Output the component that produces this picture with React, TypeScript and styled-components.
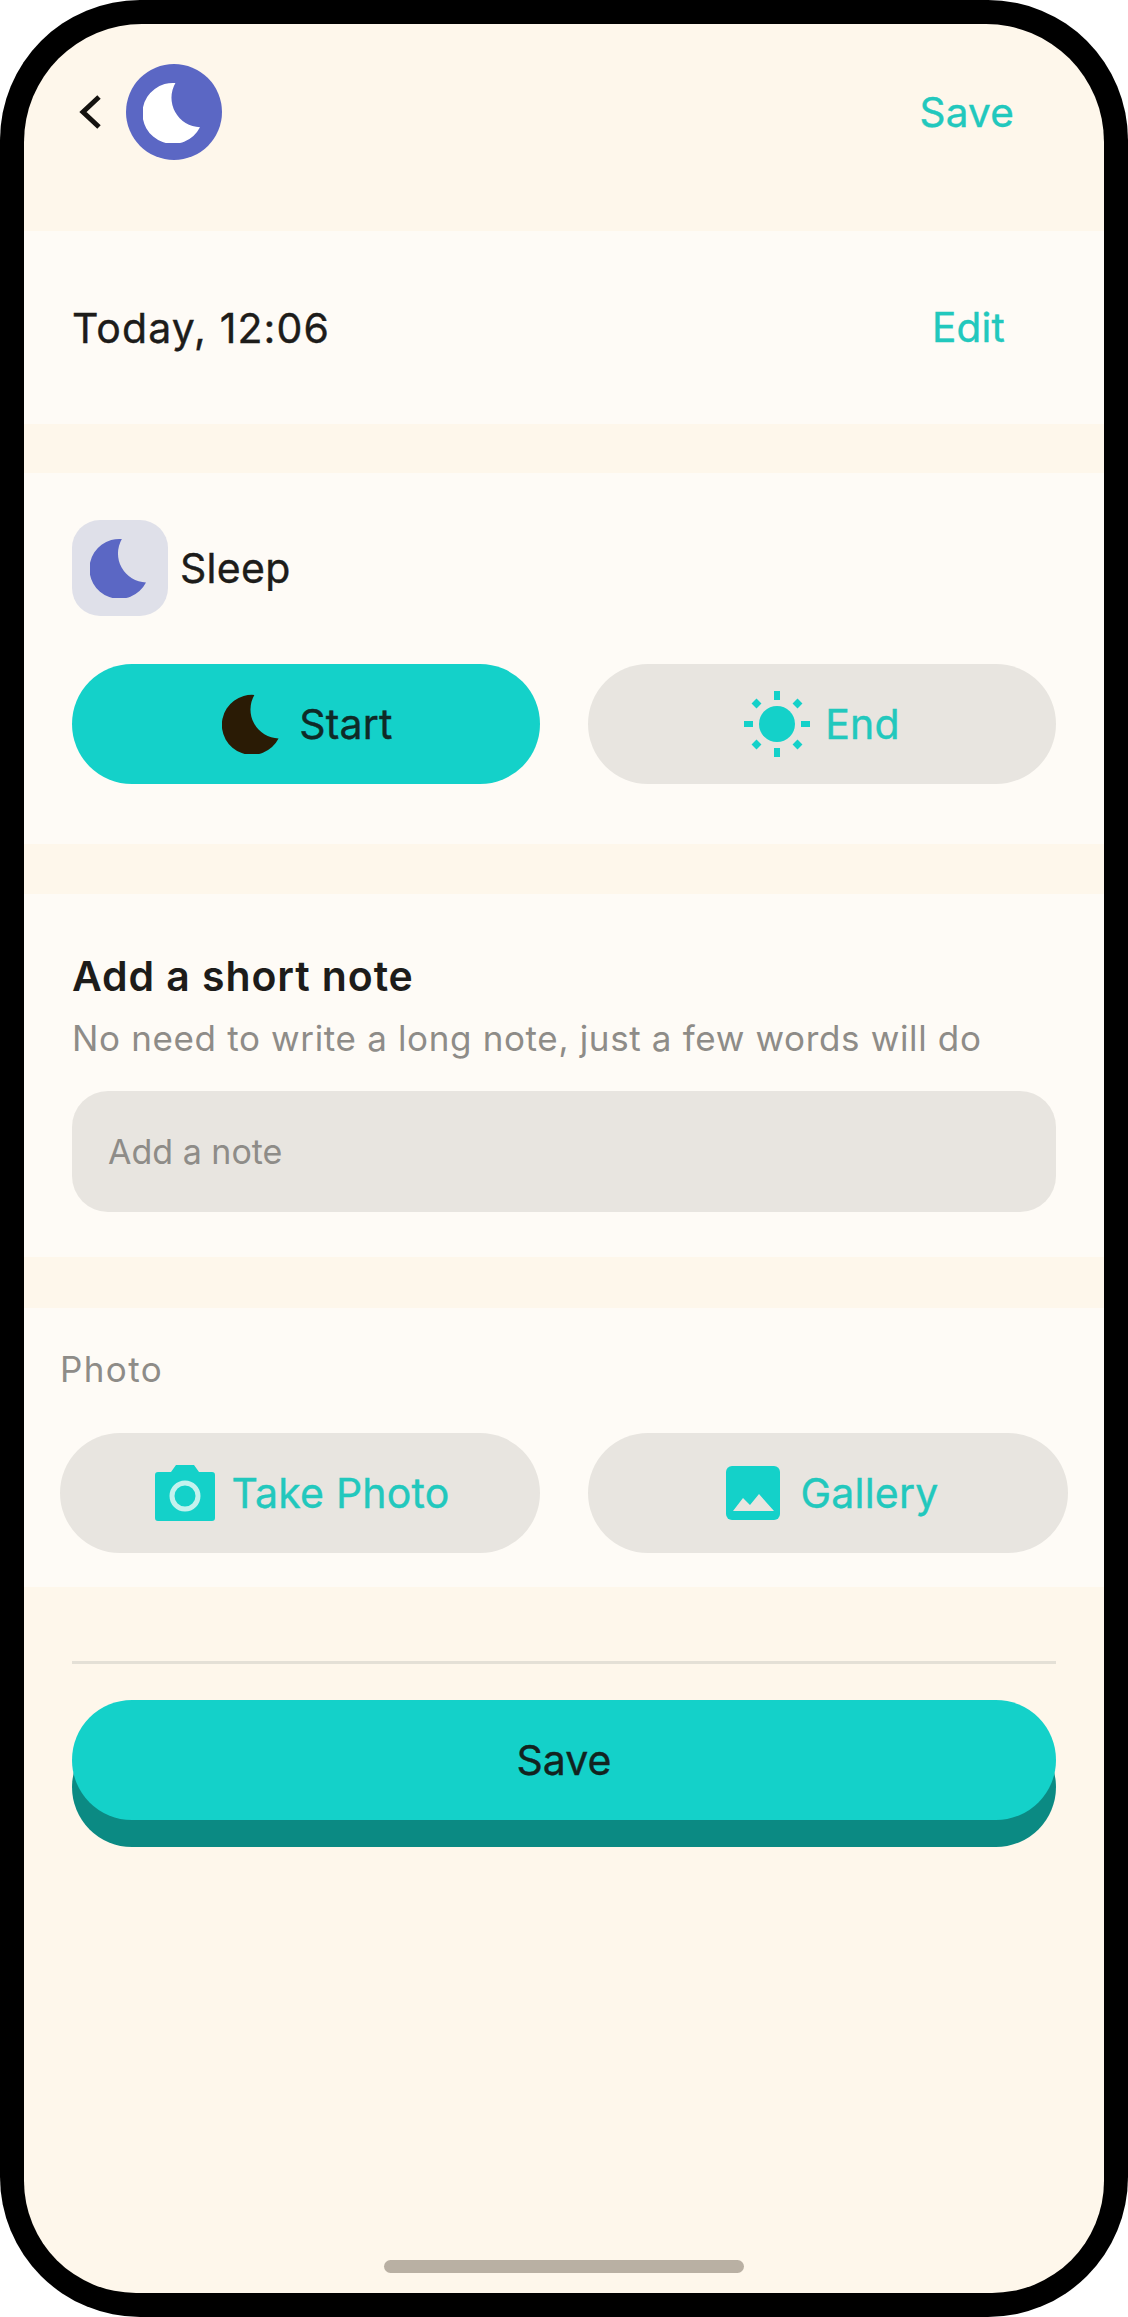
import React from 'react'
import styled, { createGlobalStyle } from 'styled-components'

const TEAL = '#14d1c9'
const TEAL_TEXT = '#22c8bd'
const GREY = '#e8e5e0'

const GlobalStyle = createGlobalStyle`
  html, body {
    margin: 0;
    padding: 0;
    background: #fff;
  }
  * {
    box-sizing: border-box;
  }
`

const Phone = styled.div`
  width: 1128px;
  height: 2317px;
  padding: 24px;
  background: #000;
  border-radius: 140px;
  font-family: Inter, 'Noto Sans', sans-serif;
`

const Screen = styled.div`
  display: flex;
  flex-direction: column;
  height: 2269px;
  overflow: hidden;
  background: #fef7eb;
  border-radius: 118px 118px 112px 112px;
`

const Header = styled.header`
  display: flex;
  align-items: center;
  height: 207px;
  padding: 40px 90px 71px 54px;
`

const BackButton = styled.svg`
  width: 24px;
  height: 36px;
  margin-right: 24px;
`

const Avatar = styled.div`
  display: flex;
  width: 96px;
  height: 96px;
  border-radius: 50%;
  background: #5b67c4;
  color: #fff;
  padding: 18px 22px 17px 17px;
`

const LinkText = styled.span`
  margin-left: auto;
  font-size: 40.5px;
  font-weight: 400;
  letter-spacing: 0.2px;
  -webkit-text-stroke: 0.4px currentColor;
  color: ${TEAL_TEXT};
`

const Section = styled.section<{ $height: number; $gapAfter: number }>`
  flex: none;
  height: ${(p) => p.$height}px;
  margin-bottom: ${(p) => p.$gapAfter}px;
  background: #fefbf6;
`

const DateRow = styled.div`
  display: flex;
  align-items: center;
  height: 100%;
  padding: 0 99px 0 48px;
`

const DateText = styled.span`
  font-size: 41px;
  font-weight: 400;
  letter-spacing: 1.1px;
  -webkit-text-stroke: 0.4px currentColor;
  color: #1d1c1a;
`

const ActivitySection = styled.div`
  display: flex;
  flex-direction: column;
  gap: 48px;
  padding: 47px 48px 0;
`

const ActivityRow = styled.div`
  display: flex;
  align-items: center;
  gap: 12px;
`

const ActivityTile = styled.div`
  width: 96px;
  height: 96px;
  padding: 18px 22px 18px 18px;
  border-radius: 28px;
  background: #dfe0e9;
  color: #5b67c4;
`

const ActivityName = styled.span`
  font-size: 41px;
  font-weight: 400;
  letter-spacing: 0.3px;
  -webkit-text-stroke: 0.4px currentColor;
  color: #1d1c1a;
`

const ButtonRow = styled.div`
  display: grid;
  grid-template-columns: 1fr 1fr;
  gap: 48px;
`

const PillButton = styled.div<{ $active?: boolean; $gap: number; $shift?: number }>`
  display: flex;
  align-items: center;
  justify-content: center;
  gap: ${(p) => p.$gap}px;
  height: 120px;
  padding-left: ${(p) => p.$shift ?? 0}px;
  border-radius: 60px;
  background: ${(p) => (p.$active ? TEAL : GREY)};
  color: ${(p) => (p.$active ? '#0f2a26' : TEAL_TEXT)};
  font-size: 41px;
  font-weight: 400;
  letter-spacing: 0.2px;
  -webkit-text-stroke: 0.4px currentColor;
`

const MoonHolder = styled.div`
  width: 57px;
  height: 60px;
  color: #2a1b05;
`

const NoteSection = styled.div`
  padding: 56px 48px 0;
`

const NoteTitle = styled.h2`
  margin: 0;
  font-size: 41px;
  line-height: 52px;
  font-weight: 600;
  letter-spacing: 0.9px;
  color: #1d1c1a;
`

const NoteHint = styled.p`
  margin: 12px 0 0;
  font-size: 35px;
  line-height: 48px;
  font-weight: 400;
  letter-spacing: 0.65px;
  color: #8e8c88;
`

const NoteInput = styled.div`
  display: flex;
  align-items: center;
  height: 121px;
  margin-top: 29px;
  padding: 0 36px;
  border-radius: 36px;
  background: ${GREY};
  font-size: 34px;
  color: #8e8c88;
`

const PhotoSection = styled.div`
  display: flex;
  flex-direction: column;
  gap: 43px;
  padding: 40px 36px 0;
`

const PhotoLabel = styled.span`
  font-size: 35px;
  line-height: 42px;
  letter-spacing: 1.4px;
  color: #8e8c88;
`

const Footer = styled.div`
  padding: 0 48px;
`

const Divider = styled.div`
  height: 3px;
  background: #e4e0d6;
`

const SaveButton = styled.div`
  display: flex;
  align-items: center;
  justify-content: center;
  height: 120px;
  margin-top: 36px;
  border-radius: 60px;
  background: ${TEAL};
  box-shadow: 0 27px 0 #0b8a83;
  font-size: 41px;
  font-weight: 400;
  -webkit-text-stroke: 0.4px currentColor;
  color: #12231f;
`

const HomeBar = styled.div`
  width: 360px;
  height: 13px;
  margin: auto auto 20px;
  border-radius: 7px;
  background: #b9b0a3;
`

const Moon = () => (
  <svg width="100%" height="100%" viewBox="16 17 58 62" fill="currentColor">
    <path d="M49 18A31 31 0 1 0 74 63A30 30 0 0 1 49 18Z" />
  </svg>
)

const SunIcon = () => (
  <svg width="66" height="66" viewBox="0 0 66 66" fill={TEAL}>
    <circle cx="33" cy="33" r="18" />
    <rect x="30" y="0" width="6" height="9" />
    <rect x="30" y="57" width="6" height="9" />
    <rect x="0" y="30" width="9" height="6" />
    <rect x="57" y="30" width="9" height="6" />
    <rect x="9" y="9" width="7" height="7" transform="rotate(45 12.5 12.5)" />
    <rect x="50" y="9" width="7" height="7" transform="rotate(45 53.5 12.5)" />
    <rect x="9" y="50" width="7" height="7" transform="rotate(45 12.5 53.5)" />
    <rect x="50" y="50" width="7" height="7" transform="rotate(45 53.5 53.5)" />
  </svg>
)

const CameraIcon = () => (
  <svg width="60" height="56" viewBox="0 0 60 56">
    <path
      d="M3 7H16L21 0H39L44 7H57Q60 7 60 10V53Q60 56 57 56H3Q0 56 0 53V10Q0 7 3 7Z"
      fill={TEAL}
    />
    <circle cx="30" cy="31" r="13" fill="none" stroke="#c4f2ee" strokeWidth="5" />
  </svg>
)

const GalleryIcon = () => (
  <svg width="54" height="54" viewBox="0 0 54 54">
    <rect width="54" height="54" rx="6" fill={TEAL} />
    <path d="M7 45L17 32L24 39L33 28L48 45Z" fill="#e8e5e0" />
  </svg>
)

export default function App(): JSX.Element {
  return (
    <>
      <GlobalStyle />
      <Phone>
        <Screen>
          <Header>
            <BackButton viewBox="0 0 24 36" fill="none">
              <path d="M21 3L5 18L21 33" stroke="#14120f" strokeWidth="5" />
            </BackButton>
            <Avatar>
              <Moon />
            </Avatar>
            <LinkText>Save</LinkText>
          </Header>

          <Section $height={193} $gapAfter={49}>
            <DateRow>
              <DateText>Today, 12:06</DateText>
              <LinkText>Edit</LinkText>
            </DateRow>
          </Section>

          <Section $height={371} $gapAfter={50}>
            <ActivitySection>
              <ActivityRow>
                <ActivityTile>
                  <Moon />
                </ActivityTile>
                <ActivityName>Sleep</ActivityName>
              </ActivityRow>
              <ButtonRow>
                <PillButton $active $gap={20} $shift={3}>
                  <MoonHolder>
                    <Moon />
                  </MoonHolder>
                  Start
                </PillButton>
                <PillButton $gap={15}>
                  <SunIcon />
                  End
                </PillButton>
              </ButtonRow>
            </ActivitySection>
          </Section>

          <Section $height={363} $gapAfter={51}>
            <NoteSection>
              <NoteTitle>Add a short note</NoteTitle>
              <NoteHint>No need to write a long note, just a few words will do</NoteHint>
              <NoteInput>Add a note</NoteInput>
            </NoteSection>
          </Section>

          <Section $height={279} $gapAfter={74}>
            <PhotoSection>
              <PhotoLabel>Photo</PhotoLabel>
              <ButtonRow>
                <PillButton $gap={16} $shift={5}>
                  <CameraIcon />
                  Take Photo
                </PillButton>
                <PillButton $gap={21} $shift={8}>
                  <GalleryIcon />
                  Gallery
                </PillButton>
              </ButtonRow>
            </PhotoSection>
          </Section>

          <Footer>
            <Divider />
            <SaveButton>Save</SaveButton>
          </Footer>

          <HomeBar />
        </Screen>
      </Phone>
    </>
  )
}
